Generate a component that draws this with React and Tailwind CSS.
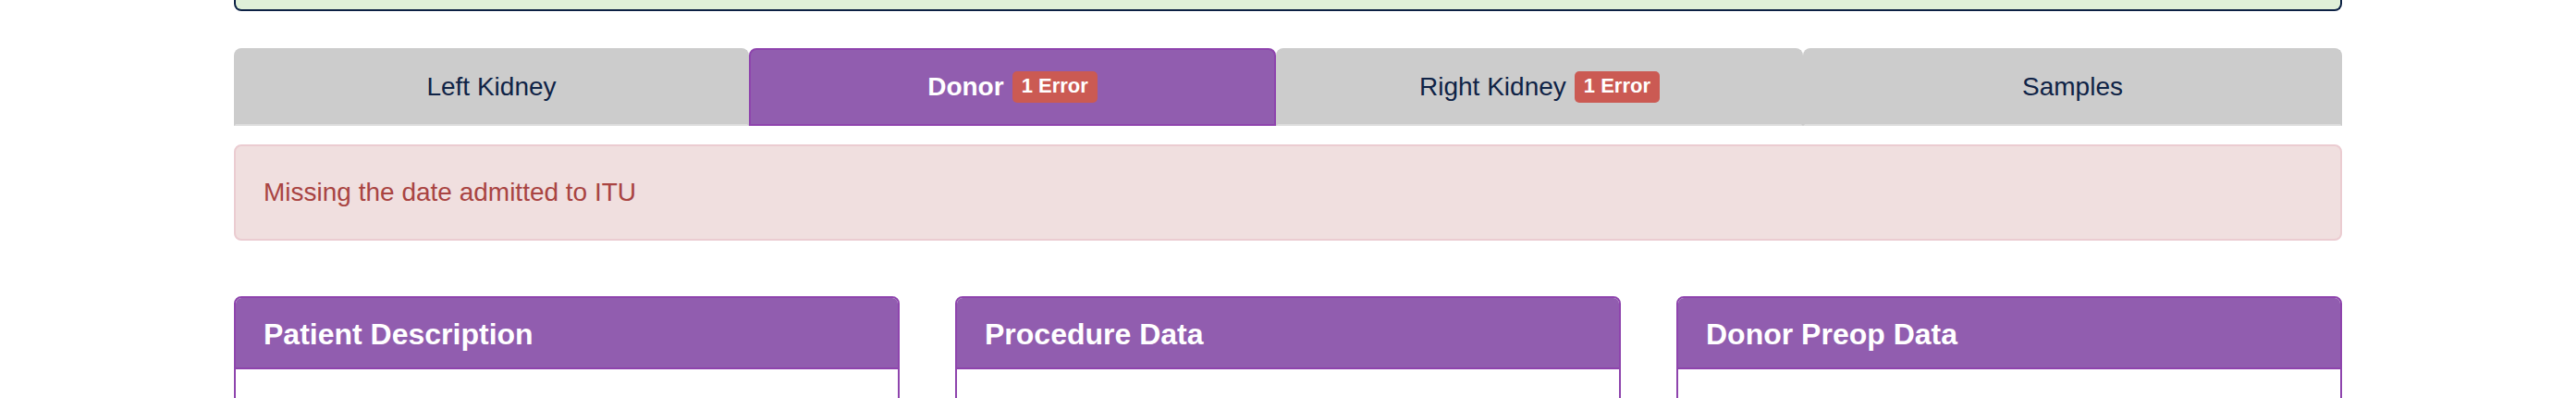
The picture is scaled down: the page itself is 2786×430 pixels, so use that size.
const TABS = [
  { label: 'Left Kidney', width: 'w-[557px]' },
  { label: 'Donor', width: 'w-[570px]', active: true, errors: 1 },
  { label: 'Right Kidney', width: 'w-[570px]', errors: 1 },
  { label: 'Samples', width: 'flex-1' }
];

const PANELS = ['Patient Description', 'Procedure Data', 'Donor Preop Data'];

function ErrorBadge({ count }) {
  return (
    <span className="ml-[9px] inline-block rounded-[5px] bg-[#cb5a53] px-[10px] pt-[5px] pb-[7px] text-[22px] leading-[22px] font-bold text-white">
      {count} Error
    </span>
  );
}

function Tab({ tab }) {
  const base = 'flex h-[84px] items-center justify-center rounded-t-lg border-2 text-[28px] leading-[40px]';
  const look = tab.active
    ? 'border-[#8e44ad] bg-[#915daf] font-bold text-white'
    : 'border-[#cccccc] border-b-[#dddddd] bg-[#cccccc] text-[#0f2346]';

  return (
    <div className={tab.width}>
      <div className={`${base} ${look}`}>
        <span>{tab.label}</span>
        {tab.errors ? <ErrorBadge count={tab.errors} /> : null}
      </div>
    </div>
  );
}

function Panel({ title }) {
  return (
    <div className="w-[720px] rounded-t-lg border-2 border-[#8e44ad] bg-white">
      <div className="rounded-t-[6px] border-b-2 border-[#8e44ad] bg-[#915daf] px-[30px] pt-[22px] pb-[18px] text-[32px] leading-[35px] font-bold text-white">
        {title}
      </div>
      <div className="h-[200px]" />
    </div>
  );
}

export default function App() {
  return (
    <div className="h-[430px] overflow-hidden bg-white font-['Liberation_Sans',Arial,sans-serif]">
      <div className="mx-auto w-[2280px]">
        {/* bottom edge of the status box above */}
        <div className="h-[12px] rounded-b-lg border-x-2 border-b-2 border-[#0c2144] bg-[#dff0d8]" />

        <div className="mt-[40px] flex">
          {TABS.map((tab) => (
            <Tab key={tab.label} tab={tab} />
          ))}
        </div>

        <div className="mt-[20px] rounded-lg border-2 border-[#ebccd1] bg-[#f0dfdf] p-[30px] text-[28px] leading-[40px] text-[#a94442]">
          Missing the date admitted to ITU
        </div>

        <div className="mt-[60px] flex gap-[60px]">
          {PANELS.map((title) => (
            <Panel key={title} title={title} />
          ))}
        </div>
      </div>
    </div>
  );
}
